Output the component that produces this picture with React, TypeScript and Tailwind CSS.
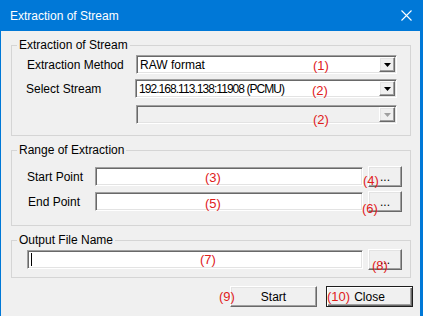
import React from 'react'

const sunken =
  'border border-t-[#a0a0a0] border-l-[#a0a0a0] border-r-white border-b-white shadow-[inset_1px_1px_0_#696969,inset_-1px_-1px_0_#e3e3e3]'
const raised =
  'border border-t-white border-l-white border-r-[#696969] border-b-[#696969] shadow-[inset_-1px_-1px_0_#a0a0a0,inset_1px_1px_0_#e3e3e3] bg-[#f0f0f0]'

function Note({ n, className }: { n: string; className: string }) {
  return (
    <span className={`absolute z-10 text-[13px] leading-[15px] text-[#e0201b] whitespace-nowrap pointer-events-none ${className}`}>
      {n}
    </span>
  )
}

function Combo({ value, disabled, note, noteClass, narrow }: { value?: string; disabled?: boolean; note: string; noteClass: string; narrow?: boolean }) {
  return (
    <div className={`relative flex h-[19px] flex-1 items-center ${sunken} ${disabled ? 'bg-[#f0f0f0]' : 'bg-white'}`}>
      <span className={`flex-1 pl-[3px] ${narrow ? 'text-[12px] tracking-[-0.95px]' : 'text-[12px]'} leading-[14px] text-black`}>{value}</span>
      <div className={`mr-[1px] flex h-[15px] w-[16px] items-center justify-center ${raised}`}>
        <svg width="7" height="4" viewBox="0 0 7 4">
          <path d="M0 0h7L3.5 4z" fill={disabled ? '#a0a0a0' : '#000'} />
        </svg>
      </div>
      <Note n={note} className={`left-[176px] ${noteClass}`} />
    </div>
  )
}

function Field({ note, noteClass, cursor }: { note: string; noteClass: string; cursor?: boolean }) {
  return (
    <div className={`relative h-[19px] flex-1 bg-white ${sunken}`}>
      {cursor && <div className="absolute left-[3px] top-[2px] h-[13px] w-[1px] bg-black" />}
      <Note n={note} className={noteClass} />
    </div>
  )
}

function Dots({ note, noteClass }: { note: string; noteClass: string }) {
  return (
    <div className={`relative flex h-[21px] w-[34px] items-center justify-center text-[12px] leading-[14px] text-black ${raised}`}>
      ...
      <Note n={note} className={noteClass} />
    </div>
  )
}

function Group({ title, children, className }: { title: string; children: React.ReactNode; className: string }) {
  return (
    <fieldset className={`mx-[10px] border border-[#d5d5d5] ${className}`}>
      <legend className="ml-[5px] px-[2px] text-[12px] leading-[14px] text-black">{title}</legend>
      {children}
    </fieldset>
  )
}

export default function App() {
  return (
    <div className="flex h-[316px] w-[423px] flex-col overflow-hidden bg-[#f0f0f0] font-['Liberation_Sans',Arial,sans-serif]">
      {/* Title bar */}
      <div className="flex h-[31px] items-center justify-between bg-[#0078d7] pl-[10px] pr-[11px] text-white">
        <span className="text-[12px] leading-[14px]">Extraction of Stream</span>
        <svg width="11" height="11" viewBox="0 0 11 11">
          <path d="M0.5 0.5l10 10M10.5 0.5l-10 10" stroke="#fff" strokeWidth="1.1" />
        </svg>
      </div>

      <div className="flex flex-1 flex-col border-l border-r-[3px] border-[#0078d7]">
        <Group title="Extraction of Stream" className="mt-[7px] mr-[9px]">
          <div className="flex flex-col pl-[15px] pr-[13px] pt-[3px] pb-[11px] text-[12px] leading-[14px] text-black">
            <div className="flex items-center">
              <span className="w-[109px]">Extraction Method</span>
              <Combo value="RAW format" note="(1)" noteClass="top-[2px]" />
            </div>
            <div className="mt-[5px] flex items-center">
              <span className="w-[109px] -ml-[1px]">Select Stream</span>
              <Combo value="192.168.113.138:11908 (PCMU)" narrow note="(2)" noteClass="top-[3px]" />
            </div>
            <div className="mt-[7px] flex items-center">
              <span className="w-[109px]" />
              <Combo disabled note="(2)" noteClass="top-[6px]" />
            </div>
          </div>
        </Group>

        <Group title="Range of Extraction" className="mt-[7px] mr-[9px]">
          <div className="flex flex-col pl-[15px] pr-[8px] pt-[9px] pb-[13px] text-[12px] leading-[14px] text-black">
            <div className="flex h-[21px] items-center gap-[5px]">
              <span className="w-[63px]">Start Point</span>
              <Field note="(3)" noteClass="left-[109px] top-[2px]" />
              <Dots note="(4)" noteClass="-left-[6px] top-[6px]" />
            </div>
            <div className="mt-[4px] flex h-[21px] items-center gap-[5px]">
              <span className="w-[63px] pl-[1px]">End Point</span>
              <Field note="(5)" noteClass="left-[109px] top-[3px]" />
              <Dots note="(6)" noteClass="-left-[7px] top-[9px]" />
            </div>
          </div>
        </Group>

        <Group title="Output File Name" className="mt-[7px] mr-[9px]">
          <div className="flex h-[21px] items-center gap-[5px] pl-[15px] pr-[8px] mt-[2px] mb-[7px] box-content">
            <Field cursor note="(7)" noteClass="left-[172px] top-[1px]" />
            <Dots note="(8)" noteClass="left-[3px] top-[8px]" />
          </div>
        </Group>

        <div className="mt-[8px] flex justify-end gap-[9px] pr-[7px] text-[12px] leading-[14px] text-black">
          <div className={`relative flex h-[21px] w-[87px] items-center justify-center ${raised}`}>
            Start
            <Note n="(9)" className="-left-[12px] top-[2px]" />
          </div>
          <div className="relative flex h-[21px] w-[87px] items-center justify-center border border-[#1e1e1e] bg-[#f0f0f0] shadow-[inset_1px_1px_0_#ffffff,inset_-1px_-1px_0_#696969,inset_-2px_-2px_0_#a0a0a0]">
            Close
            <Note n="(10)" className="left-[0px] top-[2px]" />
          </div>
        </div>
      </div>
    </div>
  )
}
